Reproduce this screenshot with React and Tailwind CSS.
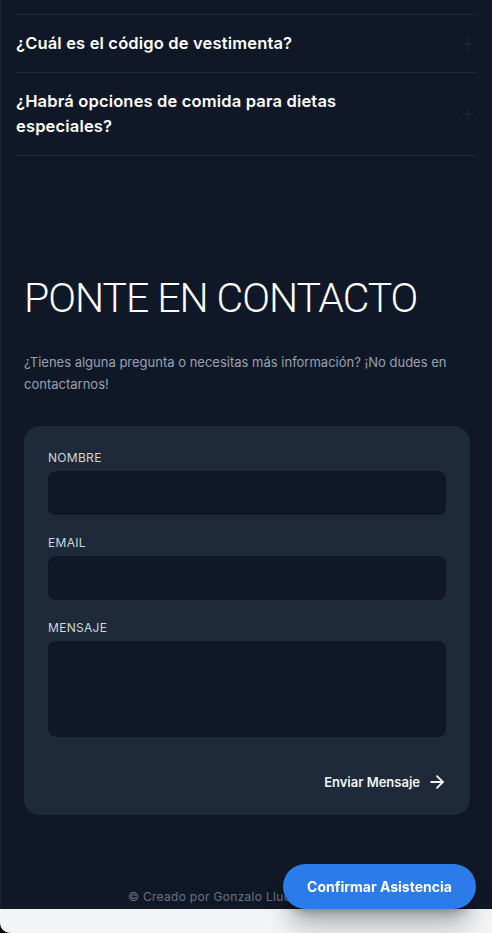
import React from 'react';
import { Plus, ArrowRight } from 'lucide-react';

const faqs = [
  '¿Cuál es el código de vestimenta?',
  '¿Habrá opciones de comida para dietas especiales?',
];

const Field = ({ label, tall }) => (
  <div>
    <label className="block text-xs leading-4 font-normal tracking-wide text-gray-300 mb-[5px]">{label}</label>
    {tall ? (
      <textarea className="block w-full h-24 rounded-lg bg-gray-900 outline-none resize-none" />
    ) : (
      <input className="block w-full h-11 rounded-lg bg-gray-900 outline-none" />
    )}
  </div>
);

export default function App() {
  return (
    <div className="h-[933px] overflow-hidden bg-black" style={{ fontFamily: 'Inter, "Noto Sans", sans-serif' }}>
      <div className="h-full bg-gray-100 rounded-bl-[10px] overflow-hidden">
        <div className="bg-gray-900 border-l border-[#1f2633]">
          {/* FAQ */}
          <div className="pt-[14px] pl-[15px] pr-[15px]">
            {faqs.map((q) => (
              <div key={q} className="border-t border-gray-800 last:border-b py-4 flex items-center justify-between gap-4">
                <p className="text-[16.5px] leading-[25px] font-semibold tracking-[0.01em] text-white pr-16">{q}</p>
                <Plus size={18} strokeWidth={1.5} className="text-gray-800 shrink-0" />
              </div>
            ))}
          </div>

          {/* Contacto */}
          <div className="pl-[23px] pr-[22px] pt-[122px]">
            <h2 className="text-[41px] leading-none font-light tracking-tight text-white" style={{ fontFamily: 'Roboto, sans-serif' }}>PONTE EN CONTACTO</h2>
            <p className="mt-8 text-[13px] leading-[22px] text-gray-400">
              ¿Tienes alguna pregunta o necesitas más información? ¡No dudes en contactarnos!
            </p>

            <div className="mt-[31px] bg-gray-800 rounded-2xl px-6 pt-6 pb-[23px]">
              <div className="space-y-5">
                <Field label="NOMBRE" />
                <Field label="EMAIL" />
                <Field label="MENSAJE" tall />
              </div>
              <div className="mt-[35px] flex justify-end">
                <button className="flex items-center gap-[7px] text-[13px] leading-5 font-semibold text-gray-100 -mr-px">
                  Enviar Mensaje <ArrowRight size={20} strokeWidth={2.2} />
                </button>
              </div>
            </div>
          </div>

          {/* Footer */}
          <footer className="pt-[74px] pb-1 text-center">
            <p className="text-xs leading-4 tracking-wide text-gray-500">© Creado por Gonzalo Lluch con cariño</p>
          </footer>
        </div>
      </div>

      <button className="fixed right-4 bottom-6 h-[45px] w-[193px] rounded-full bg-[#2b7bea] text-white text-[14px] font-bold shadow-xl shadow-black/30">
        Confirmar Asistencia
      </button>
    </div>
  );
}
